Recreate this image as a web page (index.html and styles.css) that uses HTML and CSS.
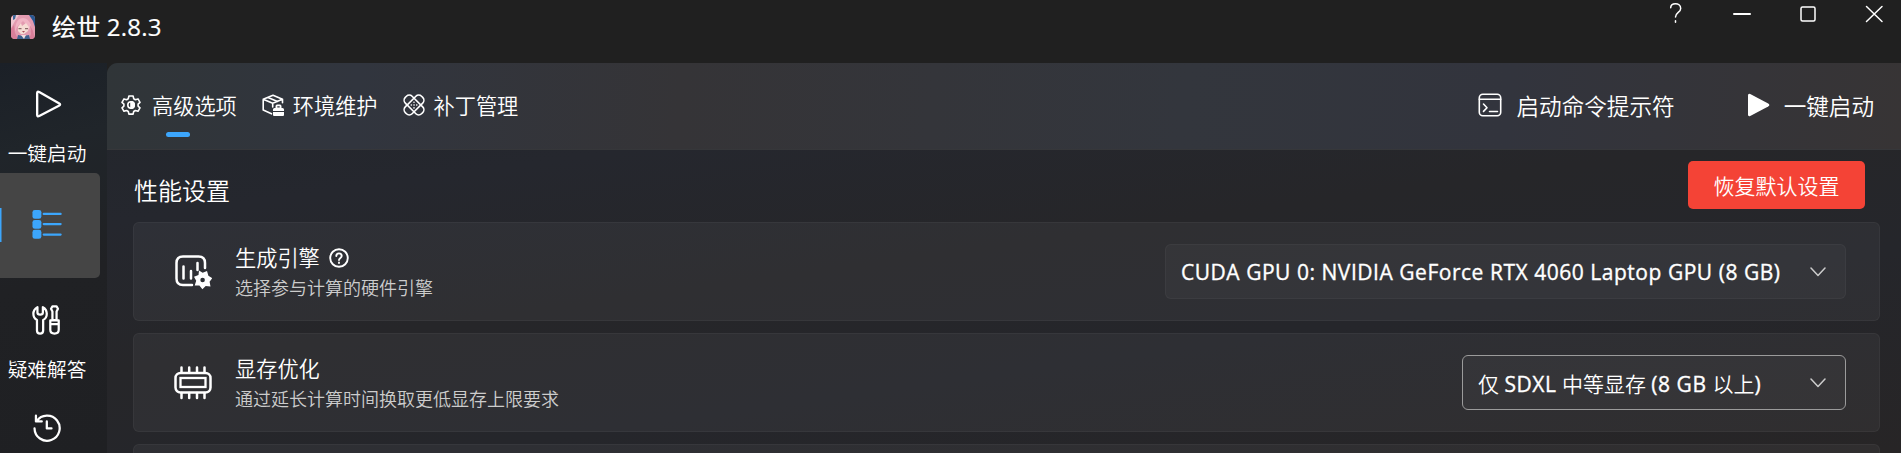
FILE: index.html
```html
<!DOCTYPE html>
<html lang="zh-CN">
<head>
<meta charset="utf-8">
<title>绘世 2.8.3</title>
<link rel="stylesheet" href="styles.css">
</head>
<body>
<div class="window">
  <header class="titlebar">
    <svg class="avatar" viewBox="0 0 24 24">
      <defs><clipPath id="round"><rect width="24" height="24" rx="4"/></clipPath></defs>
      <g clip-path="url(#round)" stroke="none">
        <rect width="24" height="24" fill="#e39bb0"/>
        <path d="M0 3l3-3h5L4 6 0 13z" fill="#efc6d0"/>
        <path d="M18 0h6v12l-2-6z" fill="#27578f"/>
        <path d="M2 0h3l-1 4-2 1z" fill="#3d6798"/>
        <path d="M5 9Q7 3 12 3t8 7l1 8-4-7-5-5-6 6-3 7z" fill="#f0b3c3"/>
        <path d="M7 12l3-4 1 3 4-3 3 4-1 4-4 3h-3l-3-3z" fill="#f6dcd4"/>
        <path d="M0 14l3-4 1 8 3 6H0zM19 10l3 6 2 8h-6l2-5z" fill="#d97f9a"/>
        <path d="M7.500 13h3v1.300h-3zM14 13h3v1.300h-3z" fill="#8d6c6c"/>
        <path d="M11 16h3l-1.500 1.700z" fill="#a84a55"/>
        <path d="M7 20l5 1 6-1 1 4H6z" fill="#40618d"/>
        <path d="M10 20h5l-2 4z" fill="#f4dede"/>
      </g>
    </svg>
    <h1 class="app-title">绘世 2.8.3</h1>
    <div class="window-buttons">
      <svg viewBox="0 0 24 24"><path d="M6.700 7.800C6.700 5 9 3.700 11.500 3.700s5.200 1.500 5.200 4.700c0 4-5.200 4-5.200 8.600M11.500 20.800v1.500" /></svg>
      <svg viewBox="0 0 24 24"><path d="M4 14h16" stroke-width="2"/></svg>
      <svg viewBox="0 0 24 24"><rect x="5" y="7" width="14" height="14" rx="1.500"/></svg>
      <svg viewBox="0 0 24 24"><path d="M4.500 6.500l15.500 15M20 6.500L4.500 21.500"/></svg>
    </div>
  </header>

  <div class="body">
    <nav class="sidebar">
      <a class="side-item">
        <svg viewBox="0 0 32 32"><path d="M5.500 4.500v23q0 2.400 2.200 1.300l21-10.900q2.500-1.400 0-2.800l-21-11.900Q5.500 2 5.500 4.500z" stroke-width="2.500"/></svg>
        <span>一键启动</span>
      </a>
      <a class="side-item active">
        <svg viewBox="0 0 32 32"><g class="solid"><rect x="0.500" y="1" width="9.500" height="9.500" rx="2.500"/><rect x="0.500" y="11.600" width="9.500" height="9.500" rx="2.500"/><rect x="0.500" y="22.200" width="9.500" height="9.500" rx="2.500"/></g><path d="M12.500 5.300h18M12.500 16h18M12.500 27.300h18" stroke-width="2.400"/></svg>
      </a>
      <a class="side-item">
        <svg viewBox="0 0 32 32"><path d="M5.800 2.300C-.2 5.500.4 13.500 5.300 16v11.200q0 3.300 3.300 3.300t3.300-3.300V16C17.200 13.200 17 5.300 11.600 2.300V8q0 2.200-2.900 2.200T5.800 8z"/><path d="M20.300 4l1.500-2.500h4.400L27.700 4l-1.500 3v9h-4.400V7zM19.500 16.500h9v10q0 4-4.500 4t-4.500-4zM19.500 20.500h9"/></svg>
        <span>疑难解答</span>
      </a>
      <a class="side-item">
        <svg viewBox="0 0 32 32"><path d="M5 8.700A13.400 13.400 0 1 1 2.700 16.500M4.200 2.800v6.200h6.200M15.800 9v7.500h5"/></svg>
      </a>
    </nav>

    <main class="content">
      <div class="command-bar">
        <div class="tabs">
          <a class="tab selected">
            <svg viewBox="0 0 20 20"><path d="M7.900 1h4.200l.6 2.700 1.700 1 2.600-.8 2 3.500-1.900 1.800v1.900l1.900 1.700-2 3.500-2.600-.8-1.700 1-.6 2.600H7.900l-.6-2.600-1.700-1-2.600.8-2-3.500 1.900-1.700V9.200L1 7.400l2-3.500 2.600.8 1.700-1z"/><circle cx="10" cy="10" r="3.200"/><path d="M10 6.800a3.200 3.200 0 0 1 0 6.400z" fill="currentColor"/></svg>
            <span>高级选项</span>
          </a>
          <a class="tab">
            <svg viewBox="0 0 22 22"><path d="M9.500 19.800L1.200 16V5.300L11 1.200l9.500 4.100v3.500M1.200 5.300l9.500 4 9.800-4M6 3.400l9.500 4M10.700 9.300V13"/><path class="solid" d="M11 15.500q0-1.500 1.500-1.500h1v-1.500q0-2 1.500-2h3q1.500 0 1.500 2V14h1q1.500 0 1.500 1.500V17H11zM11 18h11v3q0 1-1 1h-9q-1 0-1-1z"/><path d="M15.300 13.500v-1.300h2.400v1.300z" fill="#32353c" stroke="none"/></svg>
            <span>环境维护</span>
          </a>
          <a class="tab">
            <svg viewBox="0 0 22 22"><rect x="-.5" y="6.200" width="23" height="9.600" rx="4" transform="rotate(-45 11 11)"/><rect x="-.5" y="6.200" width="23" height="9.600" rx="4" transform="rotate(45 11 11)"/><path d="M11 8.200v.1M8.300 11h.1M13.700 11h.1M11 13.800v.1M11 11h.1"/></svg>
            <span>补丁管理</span>
          </a>
        </div>
        <div class="actions">
          <a class="action">
            <svg viewBox="0 0 24 24"><rect x="1.300" y="1.300" width="21.400" height="21.400" rx="3.500"/><path d="M1.300 6.300h21.400M5.500 11l3.500 3.700-3.500 3.700M11.500 18.500h8"/></svg>
            <span>启动命令提示符</span>
          </a>
          <a class="action">
            <svg viewBox="0 0 24 24"><path class="solid" d="M2 2.500Q2 0 4.200 1l18 9.500q2.300 1.500 0 3l-18 9.500Q2 24 2 21.500z"/></svg>
            <span>一键启动</span>
          </a>
        </div>
      </div>

      <section class="settings">
        <div class="section-head">
          <h2>性能设置</h2>
          <button class="reset">恢复默认设置</button>
        </div>

        <div class="card">
          <svg class="card-icon" viewBox="0 0 38 36"><path d="M18 31H9q-6.500 0-6.500-6.500V9Q2.500 2.500 9 2.500h15.500Q31 2.500 31 9v5M9.500 12.500v12M17 17v7.500M23.500 9v7"/><path class="solid" d="M25 16.500l3.700 2.300 4.300-1.800 1.400 4.800 3.800 2.400-2.600 3.500.9 4.800-4.800-.5-3.300 3.200-3-3.600-4.700-.2 1.500-4.600-2.200-4.100 4.500-1.600z"/><circle cx="28.600" cy="26" r="2.300" fill="#2c2f34" stroke="none"/></svg>
          <div class="card-text">
            <div class="card-title"><span>生成引擎</span><svg viewBox="0 0 20 20"><circle cx="10" cy="10" r="8.800"/><path d="M7.300 8Q7.300 5.400 10 5.400T12.700 8c0 1.800-2.700 2-2.700 4M10 14.500v.5"/></svg></div>
            <div class="card-desc">选择参与计算的硬件引擎</div>
          </div>
          <div class="combo engine"><b>CUDA GPU 0: NVIDIA GeForce RTX 4060 Laptop GPU (8 GB)</b><svg viewBox="0 0 16 16"><path d="M1 4l7 7.500L15 4"/></svg></div>
        </div>

        <div class="card">
          <svg class="card-icon" viewBox="0 0 38 36"><rect x="1.500" y="8" width="35" height="19.500" rx="5"/><rect x="6.500" y="13" width="25" height="9" stroke-width="2.300" stroke-linejoin="miter"/><path d="M7.500 2.500v5M15.200 2.500v5M23 2.500v5M30.500 2.500v5M7.500 28v5M15.200 28v5M23 28v5M30.500 28v5"/></svg>
          <div class="card-text">
            <div class="card-title"><span>显存优化</span></div>
            <div class="card-desc">通过延长计算时间换取更低显存上限要求</div>
          </div>
          <div class="combo focused"><span>仅 <b>SDXL</b> 中等显存 <b>(8 GB </b>以上<b>)</b></span><svg viewBox="0 0 16 16"><path d="M1 4l7 7.500L15 4"/></svg></div>
        </div>

        <div class="card"></div>
      </section>
    </main>
  </div>
</div>
</body>
</html>
```
FILE: styles.css
```css
* { box-sizing: border-box; }

body {
  margin: 0;
  background: #202020;
  color: #fff;
  font-family: "Open Sans", "Noto Sans CJK SC", sans-serif;
  font-weight: 350;
}

svg {
  display: block;
  flex: none;
  fill: none;
  stroke: currentColor;
  stroke-width: 1.6;
  stroke-linecap: round;
  stroke-linejoin: round;
}

.solid { fill: currentColor; stroke: none; }

.window {
  display: flex;
  flex-direction: column;
  width: 1901px;
  height: 453px;
  overflow: hidden;
}

.titlebar {
  display: flex;
  flex: none;
  height: 63px;
  padding-left: 11px;
}
.avatar { width: 24px; height: 24px; margin-top: 15px; }
.app-title {
  margin: 10px 0 0 17px;
  font-size: 24px;
  line-height: 34px;
  font-weight: 400;
  letter-spacing: 0.2px;
  -webkit-text-stroke: 0.2px currentColor;
}
.window-buttons {
  display: flex;
  gap: 42px;
  margin: 0 15px 0 auto;
}
.window-buttons svg { width: 24px; height: 24px; stroke-width: 1.5; }

.body { display: flex; flex: 1; min-height: 0; }

.sidebar {
  display: flex;
  flex-direction: column;
  flex: none;
  gap: 3px;
  width: 107px;
  padding-top: 2px;
  background: linear-gradient(165deg, #1b2027 0%, #20252a 22%, #202124 55%, #1f2023 100%);
}
.side-item {
  display: flex;
  flex-direction: column;
  flex: none;
  align-items: center;
  width: 100px;
  height: 105px;
  padding: 24px 6px 0 0;
  border-radius: 0 5px 5px 0;
}
.side-item svg { width: 30px; height: 30px; stroke-width: 2.4; }
.side-item span {
  margin-top: 21px;
  font-size: 19.7px;
  line-height: 28px;
  white-space: nowrap;
}
.side-item.active {
  padding-top: 36px;
  background: linear-gradient(90deg, #3ca6fc, #3ca6fc) 0 35px / 1.500px 34px no-repeat, #454545;
  color: #3ca6fc;
}

.content {
  display: flex;
  flex: 1;
  flex-direction: column;
  min-width: 0;
  border-top-left-radius: 11px;
  overflow: hidden;
  background: linear-gradient(172deg, #22262b 0%, #25272e 25%, #262629 48%, #25262b 68%, #272526 100%);
}
.command-bar {
  display: flex;
  flex: none;
  justify-content: space-between;
  height: 87px;
  padding: 0 27px 0 14px;
  border-bottom: 1px solid #36373a;
  background: linear-gradient(95deg, #303538 0%, #31353e 14%, #353437 32%, #33363d 60%, #32343d 78%, #373435 100%);
}
.tabs { display: flex; gap: 25px; }
.tab {
  position: relative;
  display: flex;
  align-items: center;
  gap: 9px;
  padding-bottom: 2px;
  font-size: 21.2px;
}
.tab span { margin-top: -1px; }
.tab svg { width: 22px; height: 22px; }
.tab.selected { gap: 11px; }
.tab.selected svg { width: 20px; height: 20px; }
.tab.selected::after {
  content: "";
  position: absolute;
  bottom: 12px;
  left: 45px;
  width: 24px;
  height: 5px;
  border-radius: 3px;
  background: #3ca6fc;
}
.actions { display: flex; gap: 71px; }
.action {
  display: flex;
  align-items: center;
  gap: 14px;
  padding-bottom: 2px;
  font-size: 22.6px;
}
.action svg { width: 24px; height: 24px; }

.settings {
  display: flex;
  flex-direction: column;
  gap: 12px;
  padding: 11px 21px 0 26px;
}
.section-head {
  display: flex;
  align-items: flex-start;
  justify-content: space-between;
  height: 49px;
  padding-right: 15px;
}
.section-head h2 {
  margin: 12px 0 0 1px;
  font-size: 24px;
  line-height: 36px;
  font-weight: 350;
}
.reset {
  width: 177px;
  height: 48px;
  padding: 0;
  border: 0;
  border-radius: 5px;
  background: #f44336;
  color: #fff;
  font-family: inherit;
  font-size: 21px;
  font-weight: 350;
}
.card {
  display: flex;
  flex: none;
  align-items: center;
  height: 99px;
  padding: 0 33px 0 40px;
  border: 1px solid rgba(255, 255, 255, 0.045);
  border-radius: 6px;
  background: rgba(255, 255, 255, 0.045);
}
.card-icon { width: 38px; height: 36px; stroke-width: 2.5; }
.card-text { margin: 3px 0 0 23px; }
.card-title {
  display: flex;
  align-items: center;
  gap: 9px;
  font-size: 21.2px;
  line-height: 30px;
}
.card-title svg { width: 20px; height: 20px; stroke-width: 1.9; }
.card-desc {
  color: #ccc;
  font-size: 18px;
  line-height: 30px;
}
.combo {
  display: flex;
  align-items: center;
  justify-content: space-between;
  width: 384px;
  height: 55px;
  margin-left: auto;
  padding: 0 19px 0 15px;
  border: 1px solid rgba(255, 255, 255, 0.04);
  border-radius: 6px;
  background: rgba(255, 255, 255, 0.03);
  font-size: 21px;
  white-space: nowrap;
}
.combo svg { width: 16px; height: 16px; stroke: #ccc; stroke-width: 1.5; }
.combo b {
  font-weight: 400;
  letter-spacing: 0.53px;
  -webkit-text-stroke: 0.35px currentColor;
}
.combo.engine { width: 681px; }
.combo.focused { border: 1.500px solid #9b9b9b; }
```
